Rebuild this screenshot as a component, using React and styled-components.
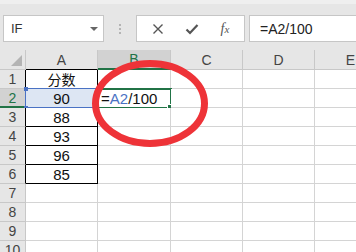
import React from 'react';
import styled, {createGlobalStyle} from 'styled-components';

const Global = createGlobalStyle`
  body {
    margin: 0;
    background: #fff;
    font-family: "Liberation Sans", Arial, sans-serif;
  }
`

const Root = styled.div`
  position: relative;
  width: 356px;
  height: 252px;
  overflow: hidden;
  background: #fff;
`

const Toolbar = styled.div`
  height: 50px;
  box-sizing: border-box;
  background: #e6e6e6;
  border-top: 4px solid #efefef;
  display: flex;
  align-items: flex-start;
  padding: 11px 0 0 3px;
`

const Box = styled.div`
  height: 27px;
  box-sizing: border-box;
  background: #fff;
  border: 1px solid #c6c6c6;
  display: flex;
  align-items: center;
  width: ${p => p.$w}px;
  flex: ${p => (p.$grow ? 1 : 'none')};
`

const NameBox = styled(Box)`
  padding: 0 5px 0 7px;
  justify-content: space-between;
  font-size: 13px;
  color: #333;
`

const Arrow = styled.span`
  width: 0;
  height: 0;
  border-left: 4px solid transparent;
  border-right: 4px solid transparent;
  border-top: 4px solid #666;
`

const Dots = styled.div`
  width: 32px;
  height: 27px;
  display: flex;
  flex-direction: column;
  align-items: center;
  justify-content: center;
  gap: 2px;
  span {
    width: 2px;
    height: 2px;
    background: #b4b4b4;
  }
`

const Buttons = styled(Box)`
  justify-content: space-around;
  padding: 0 4px;
  margin-right: 4px;
`

const Fx = styled.span`
  font-family: "Liberation Serif", serif;
  font-style: italic;
  font-size: 14px;
  color: #555;
  small {
    font-size: 11px;
  }
`

const Formula = styled(Box)`
  padding-left: 10px;
  font-size: 14px;
  color: #222;
  border-right: none;
`

const Grid = styled.div`
  display: grid;
  grid-template-columns: 26px 72px 73px 72px 72px 72px;
  grid-template-rows: 20px;
  grid-auto-rows: 19px;
`

const Head = styled.div`
  box-sizing: border-box;
  background: ${p => (p.$active ? '#d2d2d2' : '#e6e6e6')};
  color: ${p => (p.$active ? '#217346' : '#444')};
  border-right: 1px solid ${p => (p.$dark ? '#000' : '#c8c8c8')};
  border-bottom: ${p => (p.$active ? '2px solid #217346' : `1px solid ${p.$darkBottom ? '#000' : '#c8c8c8'}`)};
  font-size: 14px;
  display: flex;
  align-items: center;
  justify-content: center;
  position: relative;
`

const Corner = styled(Head)`
  &:after {
    content: "";
    position: absolute;
    right: 3px;
    bottom: 3px;
    border-left: 11px solid transparent;
    border-bottom: 11px solid #b4b4b4;
  }
`

const Cell = styled.div`
  box-sizing: border-box;
  position: relative;
  border-right: 1px solid ${p => (p.$boxed ? '#000' : '#d4d4d4')};
  border-bottom: 1px solid ${p => (p.$boxed ? '#000' : '#d4d4d4')};
  background: ${p => (p.$highlight ? '#dde6f3' : '#fff')};
  font-size: 15px;
  color: #111;
  display: flex;
  align-items: center;
  justify-content: ${p => (p.$left ? 'flex-start' : 'center')};
  padding-left: ${p => (p.$left ? '3px' : '0')};
  white-space: nowrap;
`

const Cjk = styled.span`
  font-family: "Noto Sans CJK SC", sans-serif;
  font-size: 14px;
`

const RefFrame = styled.div`
  position: absolute;
  inset: -1px;
  border: 1.5px solid #4a72c4;
  pointer-events: none;
`

const Handle = styled.span`
  position: absolute;
  width: 4px;
  height: 4px;
  background: #4a72c4;
  ${p => (p.$top ? 'top: -2.5px;' : 'bottom: -2.5px;')}
  ${p => (p.$right ? 'right: -2.5px;' : 'left: -2.5px;')}
`

const SelFrame = styled.div`
  position: absolute;
  left: -1px;
  top: -1px;
  right: -2px;
  bottom: -2px;
  border: 2px solid #217346;
  &:after {
    content: "";
    position: absolute;
    right: -4px;
    bottom: -4px;
    width: 5px;
    height: 5px;
    background: #217346;
    border: 1px solid #fff;
  }
`

const Blue = styled.span`
  color: #4a72c4;
`

const Circle = styled.svg`
  position: absolute;
  left: 0;
  top: 0;
`

const cols = ['A', 'B', 'C', 'D', 'E']
const values = ['分数', '90', '88', '93', '96', '85']

export default function App() {
  const rows = []
  for (let r = 1; r <= 10; r++) {
    const boxed = r <= 6
    rows.push(<Head key={'h' + r} $active={r === 2} $dark={boxed}>{r}</Head>)
    cols.forEach(c => {
      const key = c + r
      if (c === 'A' && boxed) {
        const v = values[r - 1]
        rows.push(
          <Cell key={key} $boxed $highlight={r === 2}>
            {r === 1 ? <Cjk>{v}</Cjk> : v}
            {r === 2 && (
              <RefFrame>
                <Handle $top />
                <Handle $top $right />
                <Handle />
                <Handle $right />
              </RefFrame>
            )}
          </Cell>
        )
      } else if (key === 'B2') {
        rows.push(
          <Cell key={key} $left>
            =<Blue>A2</Blue>/100
            <SelFrame />
          </Cell>
        )
      } else {
        rows.push(<Cell key={key} />)
      }
    })
  }

  return (
    <Root>
      <Global />
      <Toolbar>
        <NameBox $w={101}>IF<Arrow /></NameBox>
        <Dots><span /><span /><span /></Dots>
        <Buttons $w={109}>
          <svg width="12" height="12" viewBox="0 0 12 12">
            <path d="M1.5 1.5L10.5 10.5M10.5 1.5L1.5 10.5" stroke="#555" strokeWidth="1.4" />
          </svg>
          <svg width="14" height="12" viewBox="0 0 14 12">
            <path d="M1.5 6.5L5 10L12.5 2" stroke="#555" strokeWidth="2.2" fill="none" />
          </svg>
          <Fx>f<small>x</small></Fx>
        </Buttons>
        <Formula $grow>=A2/100</Formula>
      </Toolbar>
      <Grid>
        <Corner />
        {cols.map(c => (
          <Head key={c} $active={c === 'B'} $darkBottom={c === 'A'}>{c}</Head>
        ))}
        {rows}
      </Grid>
      <Circle width="356" height="252">
        <ellipse cx="150" cy="103.5" rx="54.5" ry="40" fill="none" stroke="#ee3338" strokeWidth="7" />
      </Circle>
    </Root>
  )
}
